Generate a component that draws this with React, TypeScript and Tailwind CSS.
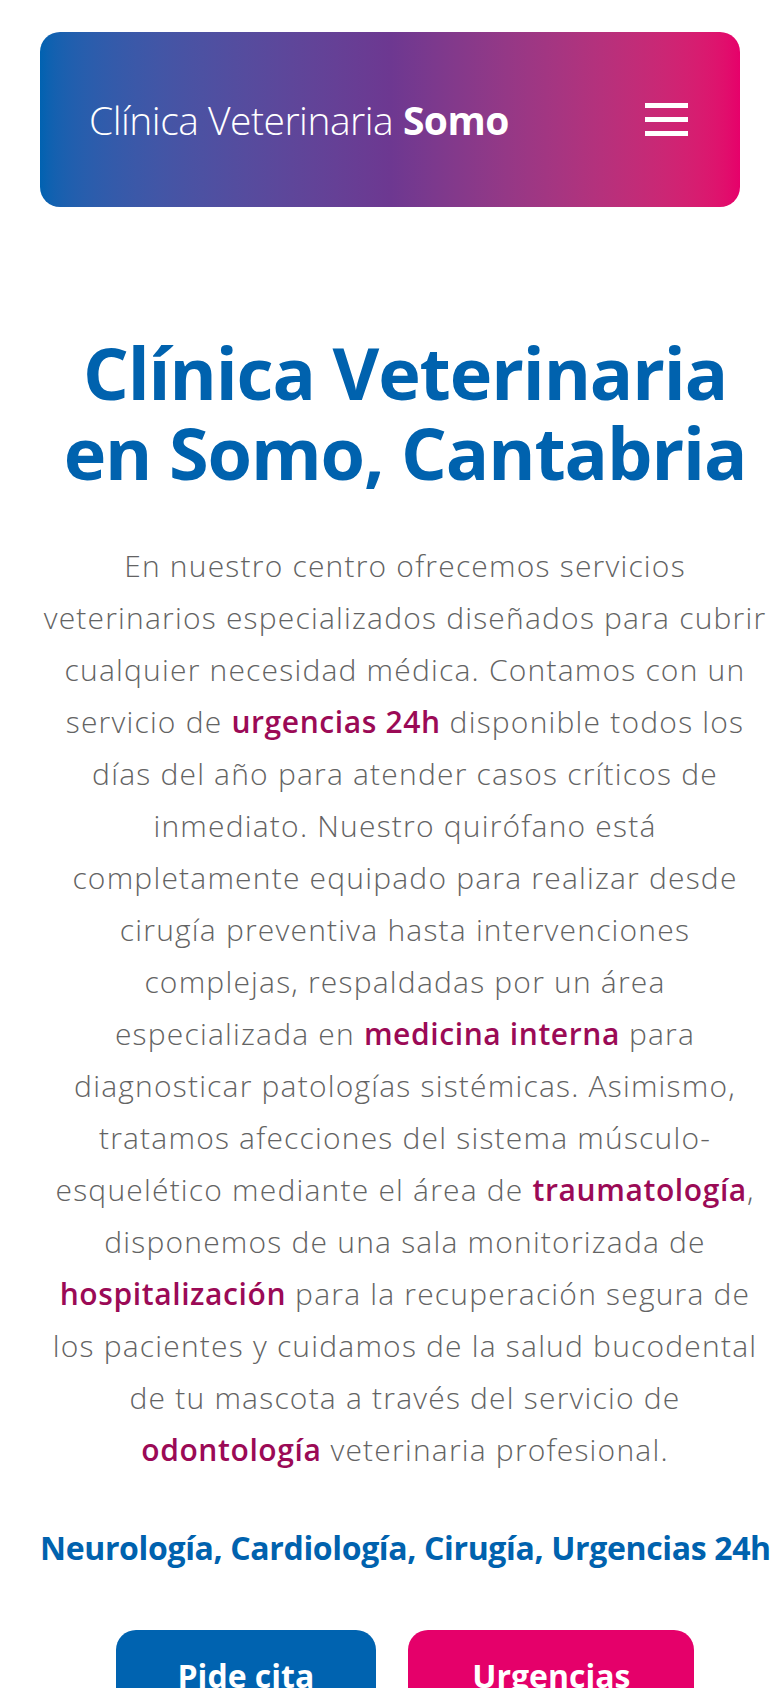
const Hl = ({ children }: { children: React.ReactNode }) => (
  <span className="font-semibold tracking-[0.6px] text-[#9b0a56]">{children}</span>
);

export default function App() {
  return (
    <div className="min-h-screen bg-white font-['Open_Sans',sans-serif] overflow-hidden">
      {/* top bar */}
      <div className="px-10 pt-8">
        <header className="flex h-[175px] items-center justify-between rounded-[20px] bg-gradient-to-r from-[#0062b1] via-[#6d3891] to-[#e6006a] pl-[49px] pr-[52px]">
          <div className="text-[39px] font-light leading-none tracking-[-0.5px] text-white">
            Clínica Veterinaria <span className="font-bold">Somo</span>
          </div>
          <button className="flex w-[43px] flex-col gap-[9px]" aria-label="menu">
            <span className="block h-[5px] w-full bg-white"></span>
            <span className="block h-[5px] w-full bg-white"></span>
            <span className="block h-[5px] w-full bg-white"></span>
          </button>
        </header>
      </div>

      <main className="pl-10 pr-[10px] pt-[125px] text-center">
        <h1 className="text-[72px] font-bold leading-[80px] tracking-[-1.1px] text-[#0062ae]">
          Clínica Veterinaria
          <br />
          en Somo, Cantabria
        </h1>

        <p className="mt-12 text-[30px] font-light leading-[52px] tracking-[1.2px] text-[#636363]">
          En nuestro centro ofrecemos servicios
          <br />
          veterinarios especializados diseñados para cubrir
          <br />
          cualquier necesidad médica. Contamos con un
          <br />
          servicio de <Hl>urgencias 24h</Hl> disponible todos los
          <br />
          días del año para atender casos críticos de
          <br />
          inmediato. Nuestro quirófano está
          <br />
          completamente equipado para realizar desde
          <br />
          cirugía preventiva hasta intervenciones
          <br />
          complejas, respaldadas por un área
          <br />
          especializada en <Hl>medicina interna</Hl> para
          <br />
          diagnosticar patologías sistémicas. Asimismo,
          <br />
          tratamos afecciones del sistema músculo-
          <br />
          esquelético mediante el área de <Hl>traumatología</Hl>,
          <br />
          disponemos de una sala monitorizada de
          <br />
          <Hl>hospitalización</Hl> para la recuperación segura de
          <br />
          los pacientes y cuidamos de la salud bucodental
          <br />
          de tu mascota a través del servicio de
          <br />
          <Hl>odontología</Hl> veterinaria profesional.
        </p>

        <h2 className="mt-[52px] whitespace-nowrap text-[32px] font-bold leading-[40px] tracking-[-0.35px] text-[#0062ae]">
          Neurología, Cardiología, Cirugía, Urgencias 24h
        </h2>

        <div className="mt-[62px] flex justify-center gap-8">
          <a className="rounded-[20px] bg-[#0063b0] px-[62px] pt-[26px] pb-[26px] text-[32px] font-bold leading-[40px] text-white">
            Pide cita
          </a>
          <a className="rounded-[20px] bg-[#e5006a] px-[64px] pt-[26px] pb-[26px] text-[32px] font-bold leading-[40px] text-white">
            Urgencias
          </a>
        </div>
      </main>
    </div>
  );
}
